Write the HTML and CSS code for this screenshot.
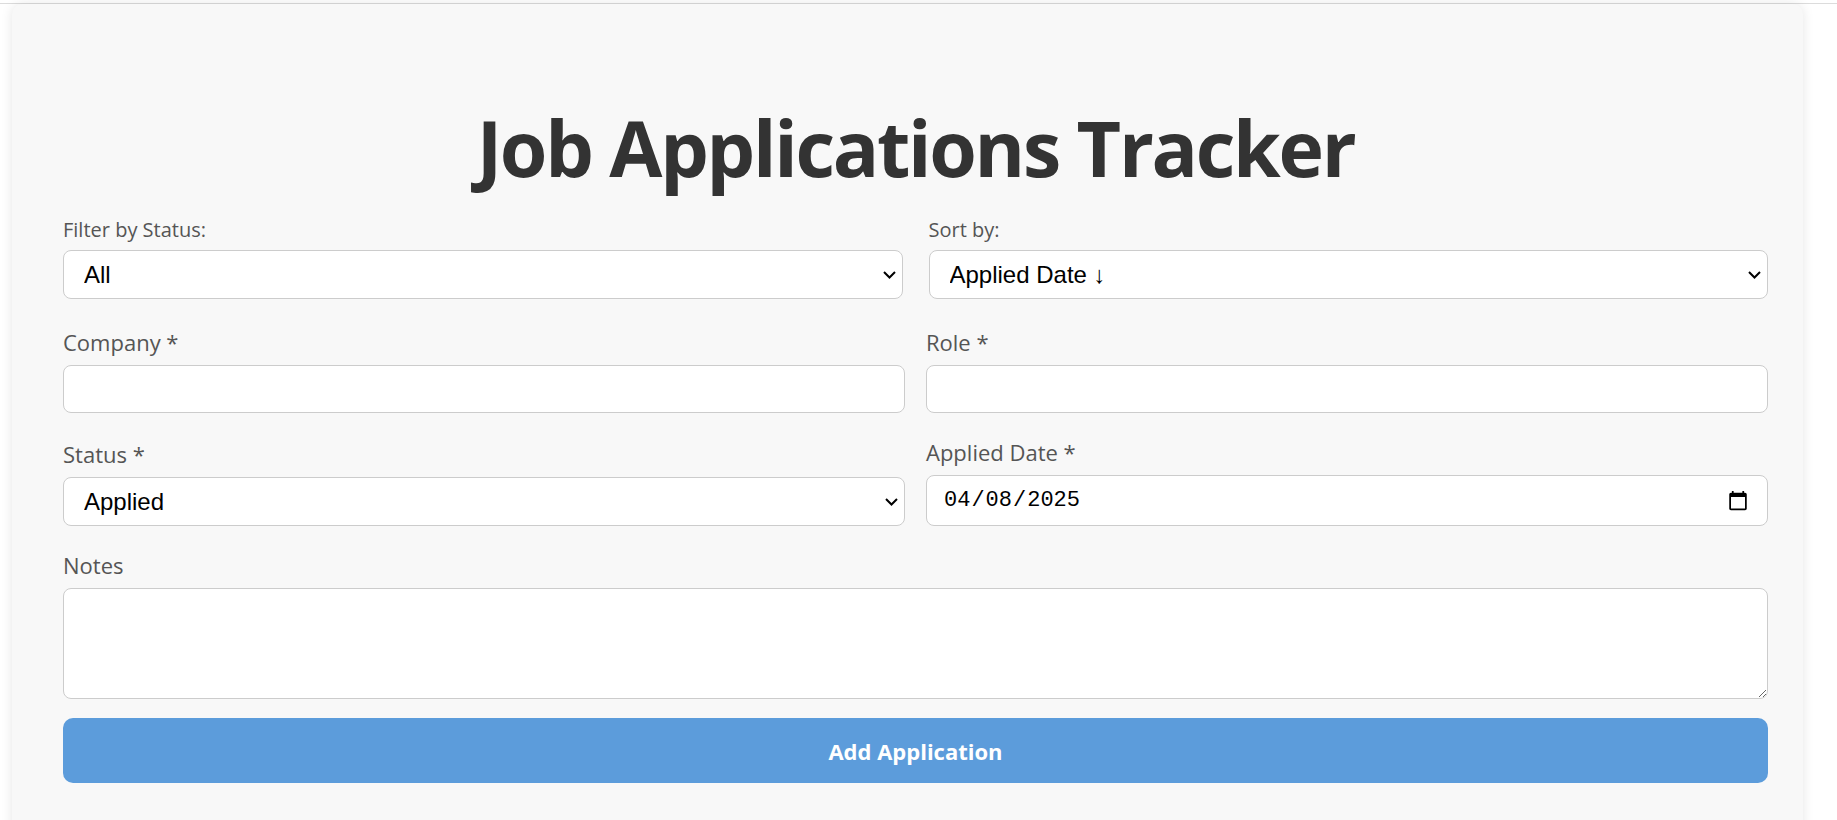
FILE: index.html
```html
<!DOCTYPE html>
<html lang="en">
<head>
<meta charset="utf-8">
<title>Job Applications Tracker</title>
<link rel="stylesheet" href="styles.css">
</head>
<body>
<div class="page-rule"></div>
<main class="card">
  <h1 class="title">Job Applications Tracker</h1>
  <div class="filters">
    <div class="filter-group">
      <label class="filter-label" for="filter">Filter by Status:</label>
      <select id="filter" class="control select">
        <option>All</option>
        <option>Applied</option>
        <option>Interview</option>
        <option>Offer</option>
        <option>Rejected</option>
      </select>
    </div>
    <div class="filter-group">
      <label class="filter-label" for="sort">Sort by:</label>
      <select id="sort" class="control select">
        <option>Applied Date ↓</option>
        <option>Applied Date ↑</option>
        <option>Company</option>
      </select>
    </div>
  </div>
  <form class="app-form">
    <div class="field">
      <label class="field-label" for="company">Company *</label>
      <input id="company" class="control input" type="text">
    </div>
    <div class="field">
      <label class="field-label" for="role">Role *</label>
      <input id="role" class="control input" type="text">
    </div>
    <div class="field">
      <label class="field-label" for="status">Status *</label>
      <select id="status" class="control select">
        <option>Applied</option>
        <option>Interview</option>
        <option>Offer</option>
        <option>Rejected</option>
      </select>
    </div>
    <div class="field">
      <label class="field-label" for="date">Applied Date *</label>
      <input id="date" class="control date" type="date" value="2025-04-08">
    </div>
    <div class="field full notes-field">
      <label class="field-label" for="notes">Notes</label>
      <textarea id="notes" class="control textarea"></textarea>
    </div>
    <button type="button" class="submit full">Add Application</button>
  </form>
</main>
</body>
</html>
```
FILE: styles.css
```css
html, body {
  margin: 0;
  padding: 0;
  background: #ffffff;
}

body {
  font-family: "Open Sans", "Noto Sans", sans-serif;
  color: #333333;
  overflow: hidden;
}

.page-rule {
  height: 1px;
  margin-top: 3px;
  background: #dcdcdc;
}

.card {
  margin-left: 12px;
  width: 1791px;
  box-sizing: border-box;
  padding: 98px 35px 120px 51px;
  background: #f8f8f8;
  border-radius: 10px;
  box-shadow: 0 0 12px rgba(0, 0, 0, 0.10);
}

.title {
  margin: 0 0 22px;
  height: 92px;
  text-align: center;
  font-size: 77px;
  line-height: 92px;
  font-weight: 700;
  color: #333333;
  letter-spacing: -2.3px;
}

.filters {
  display: flex;
  gap: 26px;
  margin-bottom: 28px;
}

.filter-group {
  flex: 1;
  display: flex;
  flex-direction: column;
}

.filter-label {
  font-size: 20px;
  line-height: 27px;
  color: #555555;
  margin-bottom: 7px;
}

.control {
  box-sizing: border-box;
  width: 100%;
  margin: 0;
  background-color: #ffffff;
  border: 1px solid #cccccc;
  border-radius: 8px;
  color: #000000;
}

.select {
  -webkit-appearance: none;
  appearance: none;
  height: 49px;
  padding: 0 30px 0 20px;
  font-family: "Liberation Sans", Arial, sans-serif;
  font-size: 24px;
  background-image: url("data:image/svg+xml,%3Csvg xmlns='http://www.w3.org/2000/svg' width='13' height='8' viewBox='0 0 13 8'%3E%3Cpolyline points='1,1 6.5,6.5 12,1' fill='none' stroke='%23000' stroke-width='2'/%3E%3C/svg%3E");
  background-repeat: no-repeat;
  background-position: right 6px center;
  background-size: 13px 8px;
}

.input {
  height: 48px;
  padding: 0 20px;
  font-family: "Liberation Sans", Arial, sans-serif;
  font-size: 24px;
}

.date {
  height: 51px;
  padding: 0 16px;
  font-family: "Liberation Mono", monospace;
  font-size: 22px;
}

.textarea {
  display: block;
  height: 111px;
  padding: 10px 16px;
  font-family: "Liberation Sans", Arial, sans-serif;
  font-size: 20px;
  resize: vertical;
}

.app-form {
  display: grid;
  grid-template-columns: 1fr 1fr;
  column-gap: 21px;
  row-gap: 24px;
  align-items: end;
}

.field {
  display: flex;
  flex-direction: column;
}

.notes-field {
  margin-bottom: -5px;
}

.full {
  grid-column: 1 / -1;
}

.field-label {
  font-size: 22px;
  line-height: 30px;
  color: #555555;
  margin-bottom: 8px;
}

.submit {
  height: 65px;
  border: none;
  border-radius: 10px;
  background: #5c9cdb;
  color: #ffffff;
  font-family: "Open Sans", "Noto Sans", sans-serif;
  font-size: 22px;
  font-weight: 700;
  cursor: pointer;
}
```
